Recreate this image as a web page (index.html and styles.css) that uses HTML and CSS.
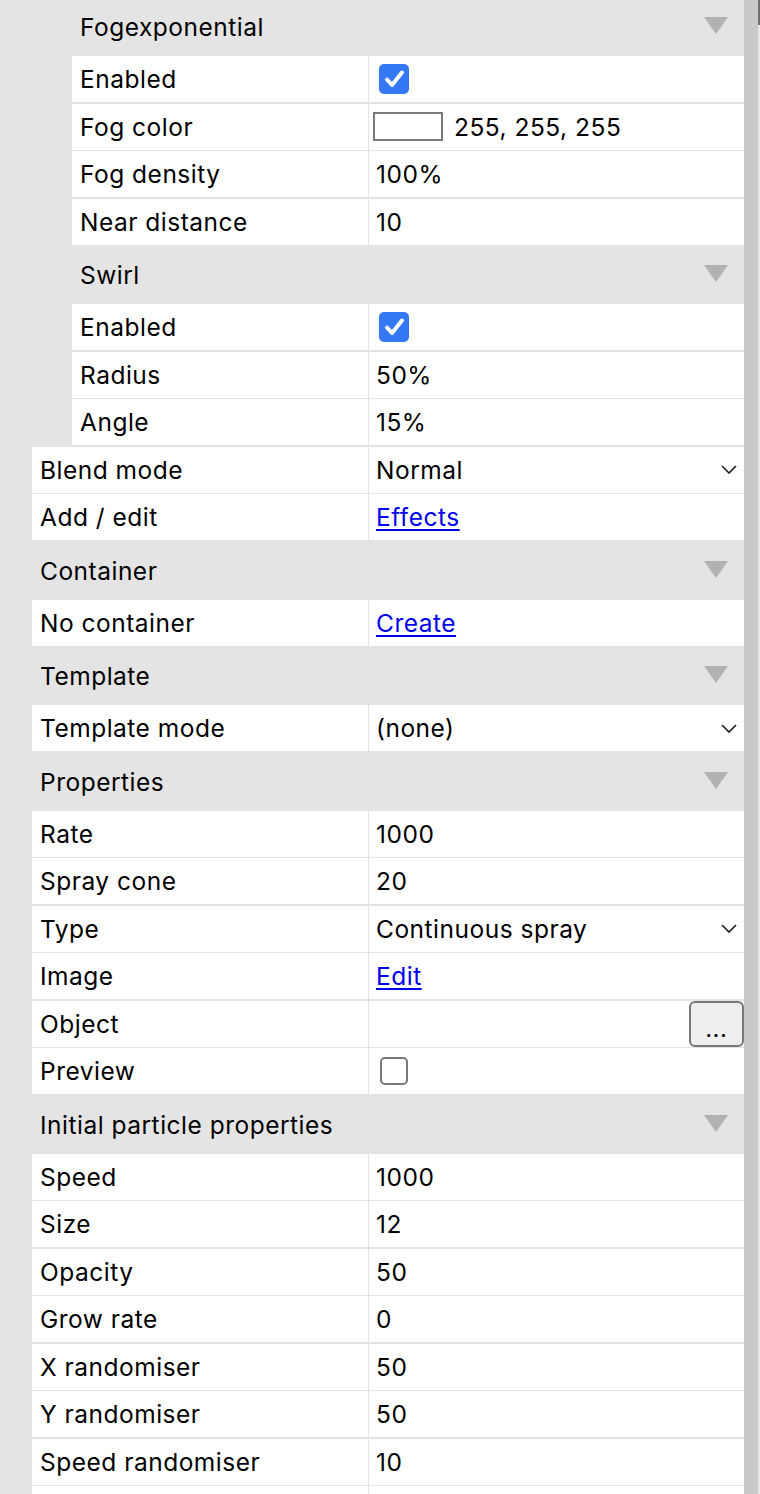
FILE: index.html
```html
<!DOCTYPE html>
<html lang="en">
<head>
<meta charset="utf-8">
<title>Properties</title>
<link rel="stylesheet" href="styles.css">
</head>
<body>
<div class="page">
  <main class="panel">
    <section class="group nested">
      <div class="group-head"><span class="head-title">Fogexponential</span><svg class="tri" viewBox="0 0 24 17"><polygon points="0,0 24,0 12,17"/></svg></div>
      <div class="row"><div class="label">Enabled</div><div class="value"><svg class="check" viewBox="0 0 30 30"><rect width="30" height="30" rx="5"/><path d="M8 15.5 L13 21 L23 8.5"/></svg></div></div>
      <div class="row"><div class="label">Fog color</div><div class="value"><span class="swatch"></span><span class="swatch-text">255, 255, 255</span></div></div>
      <div class="row"><div class="label">Fog density</div><div class="value">100%</div></div>
      <div class="row"><div class="label">Near distance</div><div class="value">10</div></div>
    </section>
    <section class="group nested">
      <div class="group-head"><span class="head-title">Swirl</span><svg class="tri" viewBox="0 0 24 17"><polygon points="0,0 24,0 12,17"/></svg></div>
      <div class="row"><div class="label">Enabled</div><div class="value"><svg class="check" viewBox="0 0 30 30"><rect width="30" height="30" rx="5"/><path d="M8 15.5 L13 21 L23 8.5"/></svg></div></div>
      <div class="row"><div class="label">Radius</div><div class="value">50%</div></div>
      <div class="row"><div class="label">Angle</div><div class="value">15%</div></div>
    </section>
    <div class="row"><div class="label">Blend mode</div><div class="value select"><span>Normal</span><svg class="chev" viewBox="0 0 16 9"><path d="M1 1 L8 8 L15 1"/></svg></div></div>
    <div class="row"><div class="label">Add / edit</div><div class="value"><a href="#" class="link">Effects</a></div></div>

    <section class="group">
      <div class="group-head"><span class="head-title">Container</span><svg class="tri" viewBox="0 0 24 17"><polygon points="0,0 24,0 12,17"/></svg></div>
      <div class="row"><div class="label">No container</div><div class="value"><a href="#" class="link">Create</a></div></div>
    </section>

    <section class="group">
      <div class="group-head"><span class="head-title">Template</span><svg class="tri" viewBox="0 0 24 17"><polygon points="0,0 24,0 12,17"/></svg></div>
      <div class="row"><div class="label">Template mode</div><div class="value select"><span>(none)</span><svg class="chev" viewBox="0 0 16 9"><path d="M1 1 L8 8 L15 1"/></svg></div></div>
    </section>

    <section class="group">
      <div class="group-head"><span class="head-title">Properties</span><svg class="tri" viewBox="0 0 24 17"><polygon points="0,0 24,0 12,17"/></svg></div>
      <div class="row"><div class="label">Rate</div><div class="value">1000</div></div>
      <div class="row"><div class="label">Spray cone</div><div class="value">20</div></div>
      <div class="row"><div class="label">Type</div><div class="value select"><span>Continuous spray</span><svg class="chev" viewBox="0 0 16 9"><path d="M1 1 L8 8 L15 1"/></svg></div></div>
      <div class="row"><div class="label">Image</div><div class="value"><a href="#" class="link">Edit</a></div></div>
      <div class="row"><div class="label">Object</div><div class="value button-cell"><button class="dots" type="button">...</button></div></div>
      <div class="row"><div class="label">Preview</div><div class="value"><span class="box"></span></div></div>
    </section>

    <section class="group">
      <div class="group-head"><span class="head-title">Initial particle properties</span><svg class="tri" viewBox="0 0 24 17"><polygon points="0,0 24,0 12,17"/></svg></div>
      <div class="row"><div class="label">Speed</div><div class="value">1000</div></div>
      <div class="row"><div class="label">Size</div><div class="value">12</div></div>
      <div class="row"><div class="label">Opacity</div><div class="value">50</div></div>
      <div class="row"><div class="label">Grow rate</div><div class="value">0</div></div>
      <div class="row"><div class="label">X randomiser</div><div class="value">50</div></div>
      <div class="row"><div class="label">Y randomiser</div><div class="value">50</div></div>
      <div class="row"><div class="label">Speed randomiser</div><div class="value">10</div></div>
      <div class="row"><div class="label"></div><div class="value"></div></div>
    </section>
  </main>
  <div class="scrollbar"><div class="track"></div><div class="edge"><div class="thumb"></div></div></div>
</div>
</body>
</html>
```

FILE: styles.css
```css
html, body {
  margin: 0;
  padding: 0;
}

body {
  background: #e4e4e4;
  font-family: Inter, "Liberation Sans", Arial, sans-serif;
  font-size: 24.5px;
  letter-spacing: 0.5px;
  color: #000;
  height: 1494px;
  overflow: hidden;
}

.page {
  display: flex;
  height: 1494px;
}

.panel {
  flex: 1;
  padding-left: 32px;
  margin-top: -3.5px;
}

.nested {
  margin-left: 40px;
}

.group-head {
  height: 58px;
  display: flex;
  align-items: center;
  justify-content: space-between;
  padding: 0 16px 0 8px;
}

.head-title {
  padding-top: 3px;
}

.tri {
  width: 24px;
  height: 17px;
  fill: #b2b2b2;
}

.row {
  margin-top: 1.5px;
  height: 46px;
  display: grid;
  grid-template-columns: 1fr 375px;
  column-gap: 1.5px;
}

.label,
.value {
  background: #fff;
  display: flex;
  align-items: center;
  white-space: nowrap;
}

.label {
  padding-left: 8px;
}

.value {
  padding: 0 7px;
}

.select {
  justify-content: space-between;
}

.chev {
  width: 16px;
  height: 9px;
  fill: none;
  stroke: #1a1a1a;
  stroke-width: 1.6;
}

.check {
  width: 30px;
  height: 30px;
  margin-left: 3px;
}

.check rect {
  fill: #3478f6;
}

.check path {
  fill: none;
  stroke: #fff;
  stroke-width: 4;
  stroke-linecap: round;
  stroke-linejoin: round;
}

.box {
  width: 28px;
  height: 28px;
  margin-left: 4px;
  box-sizing: border-box;
  border: 2px solid #787878;
  border-radius: 5px;
  background: #fff;
}

.swatch {
  width: 70px;
  height: 29px;
  margin-left: -3px;
  box-sizing: border-box;
  border: 2px solid #7a7a7a;
  background: #fff;
}

.swatch-text {
  margin-left: 11px;
}

.link {
  color: #0000ee;
  text-decoration: underline;
  text-underline-offset: 3px;
  text-decoration-thickness: 2px;
}

.button-cell {
  justify-content: flex-end;
  align-items: stretch;
  padding-right: 0;
}

.dots {
  width: 55px;
  box-sizing: border-box;
  border: 2px solid #787878;
  border-radius: 6px;
  background: #efefef;
  font-family: inherit;
  font-size: 20px;
  font-weight: 600;
  letter-spacing: 1px;
  line-height: 1;
  padding: 12px 0 0;
  color: #000;
}

.scrollbar {
  width: 16px;
  display: flex;
}

.track {
  width: 14px;
  background: #c9c9c9;
}

.edge {
  width: 2px;
  background: #e6e6e6;
}

.thumb {
  height: 25px;
  background: #6f6f6f;
}
```
